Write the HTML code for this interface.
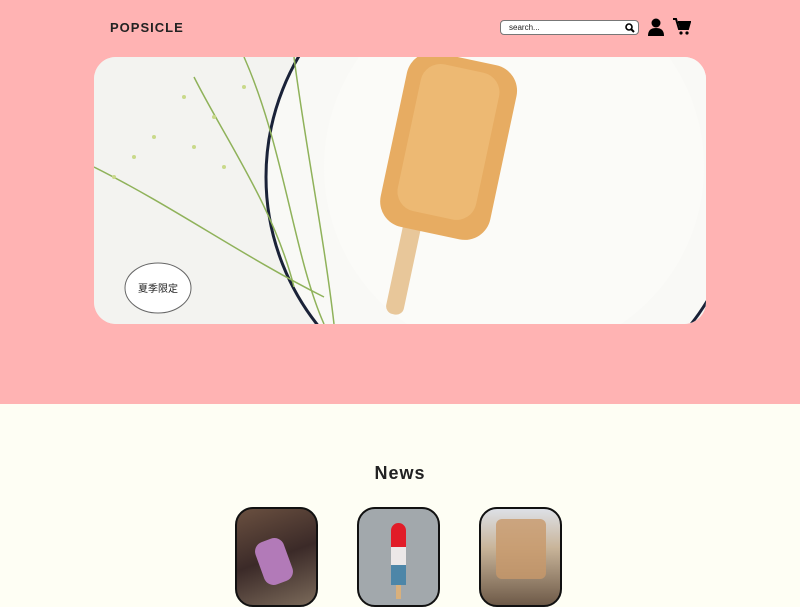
<!DOCTYPE html>
<html><head><meta charset="utf-8"><style>
*{margin:0;padding:0;box-sizing:border-box}
body{width:800px;height:600px;overflow:hidden;font-family:"Liberation Sans","Noto Sans CJK JP",sans-serif;background:#fefef4}
.top{position:absolute;left:0;top:0;width:800px;height:404px;background:#ffb3b3}
.logo{position:absolute;left:110px;top:20px;font-size:13px;font-weight:bold;letter-spacing:1px;color:#222}
.search{position:absolute;left:500px;top:20px;width:139px;height:15px;border:1px solid #777;border-radius:4px;background:#fff;font-size:8px;padding-left:8px;line-height:13px;color:#222}
.hero{position:absolute;left:94px;top:57px;width:612px;height:267px;border-radius:22px;overflow:hidden;background:#f4f4f1}
.card{position:absolute;top:507px;width:83px;height:100px;border:2px solid #111;border-radius:18px;overflow:hidden}
</style></head><body>
<div class="top">
<div class="logo">POPSICLE</div>
<div class="search">search...
<svg style="position:absolute;right:3px;top:2px" width="10" height="10" viewBox="0 0 10 10"><circle cx="4" cy="4" r="3" fill="none" stroke="#000" stroke-width="1.6"/><path d="M6 6l3 3" stroke="#000" stroke-width="2"/></svg></div>
<svg style="position:absolute;left:648px;top:18px" width="16" height="18" viewBox="0 0 16 18"><circle cx="8" cy="5" r="4.5"/><path d="M0 18c0-6 3-8 8-8s8 2 8 8z"/></svg>
<svg style="position:absolute;left:673px;top:18px" width="18" height="18" viewBox="0 0 18 18"><path d="M0 1h3l3 10h9l2-7H5" fill="none" stroke="#000" stroke-width="2"/><path d="M5 4h12l-2 7H7z"/><circle cx="8" cy="15" r="1.6"/><circle cx="14" cy="15" r="1.6"/></svg>
<div class="hero">
<svg width="612" height="267" viewBox="0 0 612 267">
<rect width="612" height="267" fill="#f3f3f0"/>
<circle cx="410" cy="120" r="238" fill="#f9f9f6" stroke="#1a2238" stroke-width="3"/>
<circle cx="420" cy="110" r="190" fill="#fbfbf8"/>
<g transform="rotate(12 350 130)">
<rect x="318" y="160" width="18" height="105" rx="8" fill="#e8c79a"/>
<rect x="290" y="0" width="112" height="178" rx="26" fill="#e7ac62"/>
<rect x="305" y="10" width="80" height="150" rx="20" fill="#efbf7a" opacity=".7"/>
</g>
<g stroke="#8fb25a" stroke-width="1.5" fill="none">
<path d="M200 0C210 80 230 180 240 267"/><path d="M150 0C190 90 200 200 230 267"/>
<path d="M0 110C80 150 150 200 230 240"/><path d="M100 20C130 80 180 150 200 230"/>
</g>
<g fill="#c9d98a"><circle cx="90" cy="40" r="2"/><circle cx="60" cy="80" r="2"/><circle cx="20" cy="120" r="2"/><circle cx="120" cy="60" r="2"/><circle cx="150" cy="30" r="2"/><circle cx="40" cy="100" r="2"/><circle cx="100" cy="90" r="2"/><circle cx="130" cy="110" r="2"/></g>
<ellipse cx="64" cy="231" rx="33" ry="25" fill="#fff" stroke="#666"/>
<text x="64" y="235" font-size="10" text-anchor="middle" fill="#222" font-family="Noto Sans CJK JP,sans-serif">夏季限定</text>
</svg></div>
</div>
<div style="position:absolute;left:0;width:800px;top:463px;text-align:center;font-size:18px;font-weight:bold;color:#222;letter-spacing:1px">News</div>
<div class="card" style="left:235px;background:linear-gradient(160deg,#6a5040,#3b2a28 50%,#7b6a5a)"><div style="position:absolute;left:22px;top:30px;width:30px;height:45px;border-radius:10px;background:#b27ab8;transform:rotate(-20deg)"></div></div>
<div class="card" style="left:357px;background:#a2a8ac"><div style="position:absolute;left:32px;top:14px;width:15px;height:24px;border-radius:8px 8px 0 0;background:#e11c28"></div><div style="position:absolute;left:32px;top:38px;width:15px;height:18px;background:#ece8e8"></div><div style="position:absolute;left:32px;top:56px;width:15px;height:20px;background:#4d86a8"></div><div style="position:absolute;left:37px;top:76px;width:5px;height:14px;background:#d9b07c"></div></div>
<div class="card" style="left:479px;background:linear-gradient(180deg,#dde0e6,#c9b59a 40%,#6e5a48)"><div style="position:absolute;left:15px;top:10px;width:50px;height:60px;background:#c8996a;border-radius:6px;opacity:.8"></div></div>
</body></html>
